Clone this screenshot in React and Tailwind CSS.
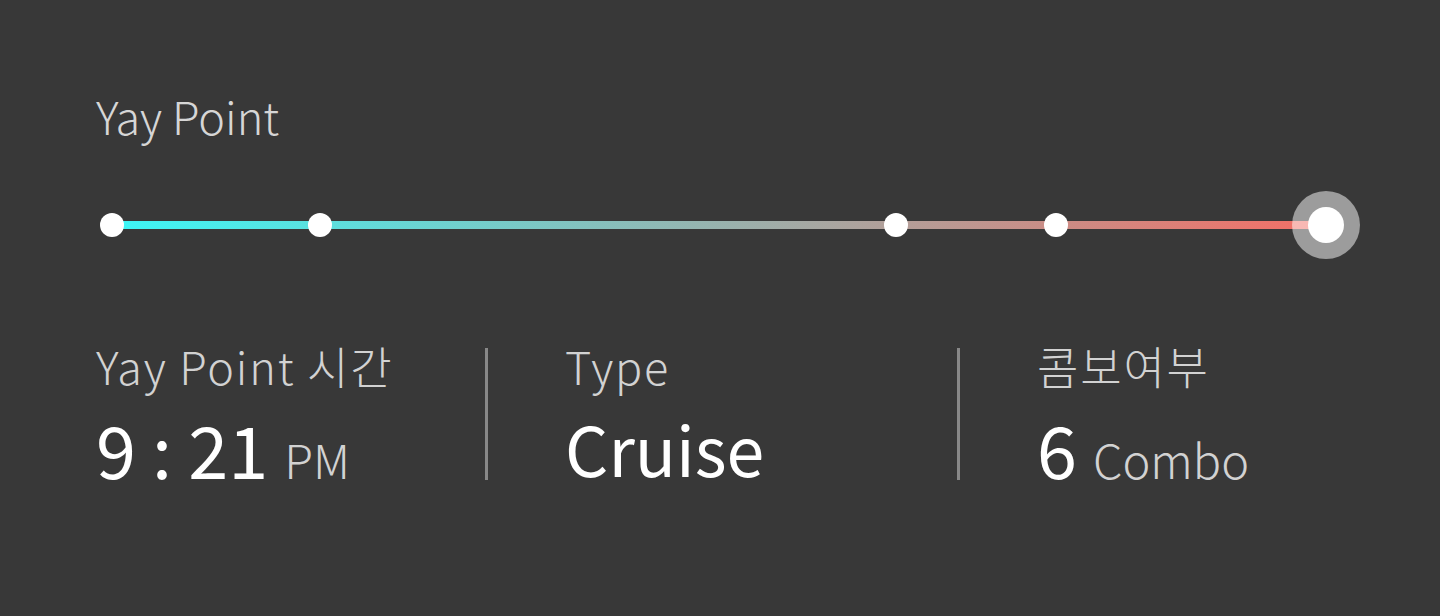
const font = { fontFamily: '"Noto Sans CJK KR", "Noto Sans", sans-serif' };

const stops = [12, 220, 796, 956];

function Track() {
  return (
    <div className="relative w-[1260px] h-[68px]">
      {/* gradient line */}
      <div className="absolute left-[12px] top-[30px] w-[1214px] h-[8px] bg-linear-to-r/srgb from-[#3cf7f7] to-[#f46e65]" />
      {stops.map((x) => (
        <div
          key={x}
          className="absolute top-[22px] w-[24px] h-[24px] -ml-[12px] rounded-full bg-white"
          style={{ left: x }}
        />
      ))}
      {/* current point */}
      <div className="absolute left-[1192px] top-0 w-[68px] h-[68px] rounded-full bg-white/50 flex items-center justify-center">
        <div className="w-[36px] h-[36px] rounded-full bg-white" />
      </div>
    </div>
  );
}

function Stat({ label, children, className }) {
  return (
    <div className={className}>
      <div className="text-[45px] leading-[45px] font-extralight tracking-[1.8px] text-[#d2d2d2] whitespace-nowrap">{label}</div>
      <div className="mt-[30px] leading-[60px] whitespace-nowrap">{children}</div>
    </div>
  );
}

export default function App() {
  return (
    <div className="w-[1440px] h-[616px] bg-[#383838] pl-[96px] pt-[93px]" style={font}>
      <h2 className="text-[45px] leading-[45px] font-extralight text-[#d6d6d6]">Yay Point</h2>

      <div className="mt-[53px] ml-[4px]">
        <Track />
      </div>

      <div className="mt-[84px] flex items-start">
        <Stat label="Yay Point 시간" className="w-[389px]">
          <span className="text-[72px] text-white">9 : 21</span>
          <span className="ml-[16px] text-[47px] font-light text-[#d2d2d2]">PM</span>
        </Stat>
        <div className="mt-[5px] w-[3px] h-[132px] bg-[#888888]" />
        <Stat label="Type" className="w-[469px] pl-[77px]">
          <span className="text-[68px] text-white">Cruise</span>
        </Stat>
        <div className="mt-[5px] w-[3px] h-[132px] bg-[#888888]" />
        <Stat label="콤보여부" className="pl-[77px]">
          <span className="text-[72px] text-white">6</span>
          <span className="ml-[16px] text-[47px] font-light text-[#d2d2d2]">Combo</span>
        </Stat>
      </div>
    </div>
  );
}
